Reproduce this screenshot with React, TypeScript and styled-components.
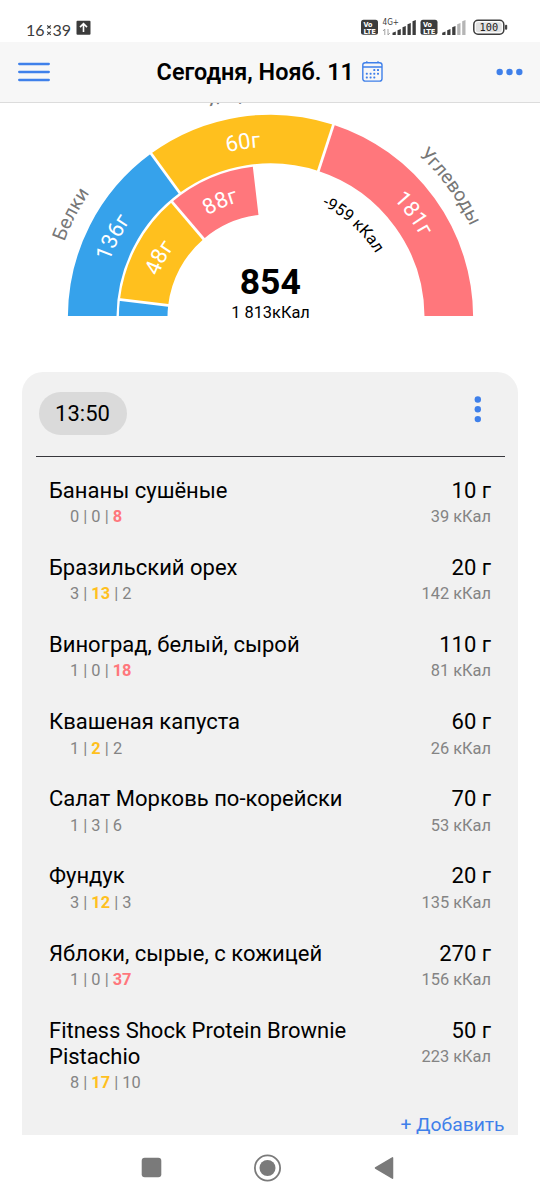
import React from "react";
import styled, { createGlobalStyle } from "styled-components";

const BLUE = "#36a2eb";
const YELLOW = "#ffc01e";
const PINK = "#ff777c";
const ACCENT = "#3f80ea";

const GlobalStyle = createGlobalStyle`
  * { box-sizing: border-box; }
  body { margin: 0; background: #fff; color: #000; font-family: Roboto, "Noto Sans", sans-serif; }
`;

const Screen = styled.div`
  width: 540px;
  height: 1200px;
  display: flex;
  flex-direction: column;
  overflow: hidden;
  background: #fff;
`;

const StatusBar = styled.div`
  height: 42px;
  flex: none;
  display: flex;
  justify-content: space-between;
  padding: 17px 30px 0 26px;
`;

const StatusGroup = styled.div`
  display: flex;
  align-items: flex-start;
`;

const Clock = styled.div`
  display: flex;
  align-items: center;
  height: 26px;
  font: 400 16px/26px Lato, sans-serif;
  color: #3c3c3c;
  margin-right: 5px;
`;

const Header = styled.header`
  height: 61px;
  flex: none;
  display: grid;
  grid-template-columns: 60px 1fr 60px;
  align-items: center;
  background: #f7f7f7;
  border-bottom: 1px solid #dcdcdc;
`;

const IconButton = styled.button<{ $align?: string }>`
  border: 0;
  padding: 0;
  background: none;
  display: flex;
  justify-content: ${(p) => p.$align ?? "center"};
`;

const MenuButton = styled(IconButton)`
  padding-left: 18px;
`;

const MoreButton = styled(IconButton)`
  padding-right: 17px;
`;

const Title = styled.h1`
  margin: 0;
  display: flex;
  align-items: center;
  justify-content: center;
  gap: 8.5px;
  font-size: 23.4px;
  font-weight: 600;
  line-height: 30px;
  white-space: nowrap;
`;

const ChartArea = styled.section`
  height: 269px;
  flex: none;
`;

const Card = styled.section`
  width: 496px;
  height: 763px;
  flex: none;
  margin-left: 22px;
  background: #f1f1f1;
  border-radius: 21px 21px 0 0;
  padding: 0 13.5px 0 14px;
  overflow: hidden;
`;

const CardHeader = styled.div`
  height: 85px;
  display: flex;
  justify-content: space-between;
  align-items: flex-start;
  padding: 20px 21px 0 2.5px;
  border-bottom: 1px solid #37373c;
`;

const TimeChip = styled.div`
  width: 88px;
  height: 43px;
  border-radius: 22px;
  background: #dadada;
  display: flex;
  align-items: center;
  justify-content: center;
  font-size: 22px;
`;

const MealMenu = styled(IconButton)`
  padding-top: 4px;
`;

const FoodList = styled.div`
  padding: 8px 13.5px 0 13px;
`;

const FoodRow = styled.div`
  display: flex;
  justify-content: space-between;
  padding: 12.5px 0 12.1px;
`;

const FoodInfo = styled.div`
  width: 320px;
`;

const FoodName = styled.div`
  font-size: 22px;
  line-height: 26px;
`;

const Macros = styled.div`
  padding: 0.6px 0 0 21px;
  font-size: 16.4px;
  line-height: 26px;
  color: #848484;
`;

const Dominant = styled.b<{ $color: string }>`
  font-weight: 700;
  color: ${(p) => p.$color};
`;

const Amounts = styled.div`
  text-align: right;
  white-space: nowrap;
`;

const Energy = styled.div`
  padding-top: 0.6px;
  font-size: 16.4px;
  line-height: 26px;
  color: #848484;
`;

const AddButton = styled.button`
  display: block;
  margin: 3px 0 0 auto;
  border: 0;
  padding: 0;
  background: none;
  color: ${ACCENT};
  font: 400 19.25px/26px Roboto, sans-serif;
`;

const NavBar = styled.nav`
  flex: 1;
  display: flex;
  justify-content: space-between;
  align-items: center;
  padding: 0 146px 0 141px;
`;

type Food = {
  name: string;
  macros: [number, number, number];
  top?: number;
  grams: number;
  kcal: number;
};

const foods: Food[] = [
  { name: "Бананы сушёные", macros: [0, 0, 8], top: 2, grams: 10, kcal: 39 },
  { name: "Бразильский орех", macros: [3, 13, 2], top: 1, grams: 20, kcal: 142 },
  { name: "Виноград, белый, сырой", macros: [1, 0, 18], top: 2, grams: 110, kcal: 81 },
  { name: "Квашеная капуста", macros: [1, 2, 2], top: 1, grams: 60, kcal: 26 },
  { name: "Салат Морковь по-корейски", macros: [1, 3, 6], grams: 70, kcal: 53 },
  { name: "Фундук", macros: [3, 12, 3], top: 1, grams: 20, kcal: 135 },
  { name: "Яблоки, сырые, с кожицей", macros: [1, 0, 37], top: 2, grams: 270, kcal: 156 },
  { name: "Fitness Shock Protein Brownie Pistachio", macros: [8, 17, 10], top: 1, grams: 50, kcal: 223 },
];

const macroColors = [BLUE, YELLOW, PINK];

const CX = 270.5;
const CY = 317.3;

const at = (r: number, deg: number) => {
  const a = (deg * Math.PI) / 180;
  return [CX + r * Math.cos(a), CY - r * Math.sin(a)];
};

const arc = (r: number, from: number, to: number) => {
  const [x1, y1] = at(r, from);
  const [x2, y2] = at(r, to);
  return `M${x1} ${y1}A${r} ${r} 0 0 1 ${x2} ${y2}`;
};

const Segment = ({ r, from, to, color }: { r: number; from: number; to: number; color: string }) => (
  <path d={arc(r, from, to)} stroke={color} strokeWidth={48.6} fill="none" />
);

const Divider = ({ inner, outer, deg }: { inner: number; outer: number; deg: number }) => {
  const [x1, y1] = at(inner, deg);
  const [x2, y2] = at(outer, deg);
  return <line x1={x1} y1={y1} x2={x2} y2={y2} stroke="#fff" strokeWidth={2.8} />;
};

type ArcTextProps = { id: string; r: number; mid: number; size: number; color: string; children: string };

const ArcText = ({ id, r, mid, size, color, children }: ArcTextProps) => (
  <>
    <path id={id} d={arc(r, mid + 40, mid - 40)} fill="none" />
    <text fontSize={size} fill={color} textAnchor="middle">
      <textPath href={`#${id}`} startOffset="50%">{children}</textPath>
    </text>
  </>
);

const Chart = () => (
  <svg width="540" height="257" viewBox="0 103 540 257" display="block" fontFamily="Roboto, sans-serif">
    <clipPath id="half">
      <rect x="0" y="103" width="540" height="213" />
    </clipPath>
    <g clipPath="url(#half)">
      <Segment r={178.3} from={180} to={126.1} color={BLUE} />
      <Segment r={178.3} from={126.1} to={71.9} color={YELLOW} />
      <Segment r={178.3} from={71.9} to={0} color={PINK} />
      <Divider inner={152} outer={204} deg={126.1} />
      <Divider inner={152} outer={204} deg={71.9} />
      <Segment r={127.3} from={180} to={173.3} color={BLUE} />
      <Segment r={127.3} from={173.3} to={130.5} color={YELLOW} />
      <Segment r={127.3} from={130.5} to={96.7} color={PINK} />
      <Divider inner={101} outer={153} deg={173.3} />
      <Divider inner={101} outer={153} deg={130.5} />
    </g>
    <ArcText id="l1" r={219.5} mid={152.7} size={19.3} color="#777">Белки</ArcText>
    <ArcText id="l2" r={219.5} mid={99} size={19.3} color="#777">Жиры</ArcText>
    <ArcText id="l3" r={219.5} mid={36} size={19.3} color="#777">Углеводы</ArcText>
    <ArcText id="v1" r={170.4} mid={153.1} size={22} color="#fff">136г</ArcText>
    <ArcText id="v2" r={170.4} mid={99} size={22} color="#fff">60г</ArcText>
    <ArcText id="v3" r={170.4} mid={36} size={22} color="#fff">181г</ArcText>
    <ArcText id="v4" r={119.5} mid={151.9} size={22} color="#fff">48г</ArcText>
    <ArcText id="v5" r={119.5} mid={113.6} size={22} color="#fff">88г</ArcText>
    <ArcText id="v6" r={123} mid={48.3} size={16.2} color="#000">-959 кКал</ArcText>
    <text x="270.3" y="294" fontSize="35.5" fontWeight="700" textAnchor="middle">854</text>
    <text x="270.5" y="318" fontSize="16.4" textAnchor="middle">1 813кКал</text>
  </svg>
);

const VoLte = ({ x }: { x: number }) => (
  <g transform={`translate(${x} 0)`}>
    <rect x="0" y="2.7" width="17" height="15" rx="2.5" fill="#3c3c3c" />
    <g fill="#fff" fontSize="7" fontWeight="700" fontFamily="DejaVu Sans, sans-serif">
      <text x="2.5" y="9.5" textLength="9" lengthAdjust="spacingAndGlyphs">Vo</text>
      <text x="2.5" y="16.5" textLength="12.5" lengthAdjust="spacingAndGlyphs">LTE</text>
    </g>
  </g>
);

const Signal = ({ x, level }: { x: number; level: number }) => (
  <g>
    {[3.5, 6, 9, 12, 15].map((h, i) => (
      <path
        key={h}
        d={`M${x + i * 5} 18v${-h + 1.2}l3.3-1.2v${h}z`}
        fill={i < level ? "#3c3c3c" : "#b5b5b5"}
      />
    ))}
  </g>
);

const StatusIcons = () => (
  <svg width="150" height="22" viewBox="0 0 150 22">
    <VoLte x={1} />
    <text x="22.5" y="7.5" fontSize="8" fill="#3c3c3c" fontFamily="DejaVu Sans, sans-serif" textLength="16.5" lengthAdjust="spacingAndGlyphs">4G+</text>
    <path d="M24.8 18v-6l-1.8 2M28 12v6l1.8-2" stroke="#999" fill="none" strokeWidth=".9" />
    <Signal x={32.5} level={5} />
    <VoLte x={60.5} />
    <Signal x={82.2} level={3} />
    <rect x="113.8" y="3.2" width="30" height="14" rx="4.2" fill="#fff" stroke="#3c3c3c" strokeWidth="1.5" />
    <rect x="115.8" y="5.2" width="26" height="10" rx="2.2" fill="#e2e2e2" />
    <rect x="145" y="7.7" width="2.2" height="5" rx="1" fill="#444" />
    <text x="128.9" y="14" fontSize="10.3" fill="#222" textAnchor="middle" fontFamily="DejaVu Sans Mono, monospace">100</text>
  </svg>
);

const CalendarIcon = () => (
  <svg width="21" height="22" viewBox="0 0 21 22" fill="none" stroke={ACCENT}>
    <rect x=".8" y="1.7" width="19.2" height="18.4" rx="2.4" strokeWidth="1.4" />
    <path d="M1 6h19M4.8 1.7V.3M16 1.7V.3" strokeWidth="1.4" />
    <g fill={ACCENT} stroke="none">
      {[[12.3, 9], [16, 9], [4.8, 12.7], [8.6, 12.7], [12.3, 12.7], [16, 12.7], [4.8, 16.4], [8.6, 16.4], [12.3, 16.4]].map(([x, y]) => (
        <rect key={`${x}-${y}`} x={x - 1} y={y - 0.9} width="2" height="1.9" rx=".6" />
      ))}
    </g>
  </svg>
);

const App = () => (
  <Screen>
    <GlobalStyle />
    <StatusBar>
      <StatusGroup>
        <Clock>
          <span>16</span>
          <svg width="8" height="12" viewBox="0 0 8 12" stroke="#3c3c3c" strokeWidth="1.1">
            <path d="M2.2 1.5l3.6 3.2M5.8 1.5L2.2 4.7M2.2 7.6l3.6 3.2M5.8 7.6l-3.6 3.2" />
          </svg>
          <span>39</span>
        </Clock>
        <svg width="15" height="18" viewBox="0 0 15 18">
          <rect x=".5" y="3.7" width="14" height="14" rx="1" fill="#3c3c3c" />
          <path d="M7.5 15V7M4 10.1l3.5-3.5 3.5 3.5" stroke="#fff" strokeWidth="1.6" fill="none" />
        </svg>
      </StatusGroup>
      <StatusIcons />
    </StatusBar>
    <Header>
      <MenuButton $align="flex-start">
        <svg width="32" height="20" viewBox="0 0 32 20" stroke={ACCENT} strokeWidth="2.3" strokeLinecap="round">
          <path d="M1.2 2h29.6M1.2 10h29.6M1.2 18h29.6" />
        </svg>
      </MenuButton>
      <Title>
        Сегодня, Нояб. 11
        <CalendarIcon />
      </Title>
      <MoreButton $align="flex-end">
        <svg width="27" height="8" viewBox="0 0 27 8" fill={ACCENT}>
          <circle cx="3.7" cy="4" r="3.2" />
          <circle cx="13.5" cy="4" r="3.2" />
          <circle cx="23.3" cy="4" r="3.2" />
        </svg>
      </MoreButton>
    </Header>
    <ChartArea>
      <Chart />
    </ChartArea>
    <Card>
      <CardHeader>
        <TimeChip>13:50</TimeChip>
        <MealMenu>
          <svg width="12" height="28" viewBox="0 0 12 28" fill={ACCENT}>
            <circle cx="5.8" cy="3.5" r="3.2" />
            <circle cx="5.8" cy="13.3" r="3.2" />
            <circle cx="5.8" cy="23.1" r="3.2" />
          </svg>
        </MealMenu>
      </CardHeader>
      <FoodList>
        {foods.map((f) => (
          <FoodRow key={f.name}>
            <FoodInfo>
              <FoodName>{f.name}</FoodName>
              <Macros>
                {f.macros.map((m, i) => (
                  <React.Fragment key={i}>
                    {i > 0 && " | "}
                    {f.top === i ? <Dominant $color={macroColors[i]}>{m}</Dominant> : m}
                  </React.Fragment>
                ))}
              </Macros>
            </FoodInfo>
            <Amounts>
              <FoodName>{f.grams} г</FoodName>
              <Energy>{f.kcal} кКал</Energy>
            </Amounts>
          </FoodRow>
        ))}
      </FoodList>
      <AddButton>+ Добавить</AddButton>
    </Card>
    <NavBar>
      <svg width="21" height="21" viewBox="0 0 21 21">
        <rect x=".7" y=".7" width="19.6" height="19.6" rx="3" fill="#7a7a7a" />
      </svg>
      <svg width="28" height="28" viewBox="0 0 28 28">
        <circle cx="13.5" cy="14" r="12.6" fill="none" stroke="#7a7a7a" strokeWidth="1.8" />
        <circle cx="13.5" cy="14" r="8" fill="#7a7a7a" />
      </svg>
      <svg width="20" height="24" viewBox="0 0 20 24">
        <path d="M1.5 12L18.5 1.8v20.4z" fill="#7a7a7a" stroke="#7a7a7a" strokeWidth="1.5" strokeLinejoin="round" />
      </svg>
    </NavBar>
  </Screen>
);

export default App;
